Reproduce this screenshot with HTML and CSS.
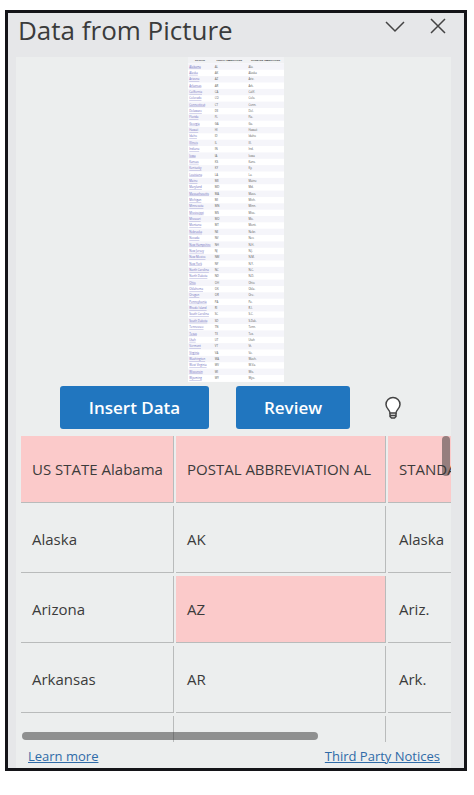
FILE: index.html
```html
<!DOCTYPE html>
<html lang="en">
    <head>
        <meta charset="utf-8">
        <title>Data from Picture</title>
        <link rel="stylesheet" href="styles.css">
    </head>
    <body>
        <main class="pane">
            <header class="pane-header">
                <h1>Data from Picture</h1>
                <button class="icon-btn" aria-label="Pane options">
                    <svg width="20" height="20" viewBox="0 0 20 20"><path d="M1 6l9 9 9-9"/></svg>
                </button>
                <button class="icon-btn" aria-label="Close">
                    <svg width="20" height="20" viewBox="0 0 20 20"><path d="M3 3l14 14M17 3L3 17"/></svg>
                </button>
            </header>
            <div class="content">
                <div class="preview">
                    <svg id="preview" width="96" height="325" viewBox="0 0 302 1022" role="img" aria-label="Selected picture"></svg>
                </div>
                <div class="actions">
                    <button class="primary insert">Insert Data</button>
                    <button class="primary review">Review</button>
                    <button class="icon-btn tip" aria-label="Tips">
                        <svg width="18" height="24" viewBox="0 0 18 24">
                            <path class="bulb" d="M6 17C6 14 2 12.500 2 8.500a7 7 0 0 1 14 0C16 12.500 12 14 12 17z"/>
                            <path d="M6 17v3.500l1.500 1.500h3l1.500-1.500V17M6 19.500h6"/>
                        </svg>
                    </button>
                </div>
                <div class="grid-wrap">
                    <div class="grid-view">
                        <table class="grid">
                            <thead>
                                <tr>
                                    <th class="flag col-state">US STATE Alabama</th>
                                    <th class="flag col-postal">POSTAL ABBREVIATION AL</th>
                                    <th class="flag col-standard">STANDARD</th>
                                </tr>
                            </thead>
                            <tbody>
                                <tr><td>Alaska</td><td>AK</td><td>Alaska</td></tr>
                                <tr><td>Arizona</td><td class="flag">AZ</td><td>Ariz.</td></tr>
                                <tr><td>Arkansas</td><td>AR</td><td>Ark.</td></tr>
                                <tr><td></td><td></td><td></td></tr>
                            </tbody>
                        </table>
                    </div>
                    <div class="bar bar-y"></div>
                    <div class="bar bar-x"></div>
                </div>
                <footer class="links">
                    <a href="#">Learn more</a>
                    <a href="#">Third Party Notices</a>
                </footer>
            </div>
        </main>
        <script src="script.js"></script>
    </body>
</html>
```

FILE: styles.css
```css
* {
    box-sizing: border-box;
}
body {
    margin: 0;
    padding: 10px 7px 24px 5px;
    background: #fff;
    color: #3b3b3b;
    font-family: "Open Sans", "Noto Sans", sans-serif;
    font-size: 15px;
}
button {
    border: none;
    font-family: inherit;
    cursor: pointer;
}
.pane {
    padding: 0 13px 0 8px;
    border: 3px solid #141418;
    background: #e6e7e9;
}
.pane-header {
    display: flex;
    align-items: flex-start;
    gap: 23px;
    height: 44px;
    padding-left: 2px;
}
.pane-header h1 {
    flex: 1;
    margin: 0;
    font-size: 26px;
    font-weight: 400;
    line-height: 34px;
}
.icon-btn {
    display: flex;
    padding: 0;
    background: none;
}
.icon-btn svg {
    fill: none;
    stroke: #444;
    stroke-width: 1.5;
}
.pane-header .icon-btn {
    margin-top: 3px;
}
.pane-header .icon-btn:last-child {
    margin-right: 3px;
}
.content {
    background: #eceeee;
}
.preview {
    display: flex;
    justify-content: center;
    padding-left: 4px;
}
.preview text {
    font-size: 9px;
    fill: #555;
}
.preview .name {
    fill: #6a6aba;
    text-decoration: underline;
}
.preview .head {
    font-size: 7px;
    font-weight: 700;
    fill: #333;
}
.actions {
    display: flex;
    align-items: center;
    gap: 27px;
    padding: 4px 0 7px 44px;
}
.primary {
    height: 43px;
    border-radius: 3px;
    background: #2176bf;
    color: #fff;
    font-size: 17px;
    font-weight: 600;
}
.insert {
    width: 149px;
}
.review {
    width: 114px;
}
.tip {
    margin-left: 7px;
}
.tip .bulb {
    fill: #fff;
}
.grid-wrap {
    position: relative;
    padding-left: 5px;
}
.grid-view {
    height: 306px;
    overflow: auto;
    scrollbar-width: none;
}
.grid {
    width: 640px;
    border-collapse: separate;
    border-spacing: 0;
    table-layout: fixed;
}
.grid th,
.grid td {
    height: 70px;
    padding: 0 11px 2px;
    border: solid #eceeee;
    border-width: 0 2px 3px 0;
    background-clip: padding-box;
    box-shadow: inset -1px -1px #b9bbbb;
    font-weight: 400;
    text-align: left;
    white-space: nowrap;
}
.col-state {
    width: 155px;
}
.col-postal {
    width: 212px;
}
.grid .flag {
    background-color: #fbcaca;
}
.bar {
    position: absolute;
    border-radius: 4px;
    background: rgba(50, 50, 50, .5);
}
.bar-y {
    top: 0;
    right: 1px;
    width: 8px;
    height: 40px;
}
.bar-x {
    bottom: 2px;
    left: 6px;
    width: 68%;
    height: 8px;
}
.links {
    display: flex;
    justify-content: space-between;
    padding: 5px 11px 2px 12px;
    font-size: 13px;
    line-height: 19px;
}
.links a {
    color: #2f6ba8;
}
```

FILE: script.js
```js
const states = [
    ["Alabama", "AL", "Ala."], ["Alaska", "AK", "Alaska"], ["Arizona", "AZ", "Ariz."],
    ["Arkansas", "AR", "Ark."], ["California", "CA", "Calif."], ["Colorado", "CO", "Colo."],
    ["Connecticut", "CT", "Conn."], ["Delaware", "DE", "Del."], ["Florida", "FL", "Fla."],
    ["Georgia", "GA", "Ga."], ["Hawaii", "HI", "Hawaii"], ["Idaho", "ID", "Idaho"],
    ["Illinois", "IL", "Ill."], ["Indiana", "IN", "Ind."], ["Iowa", "IA", "Iowa"],
    ["Kansas", "KS", "Kans."], ["Kentucky", "KY", "Ky."], ["Louisiana", "LA", "La."],
    ["Maine", "ME", "Maine"], ["Maryland", "MD", "Md."], ["Massachusetts", "MA", "Mass."],
    ["Michigan", "MI", "Mich."], ["Minnesota", "MN", "Minn."], ["Mississippi", "MS", "Miss."],
    ["Missouri", "MO", "Mo."], ["Montana", "MT", "Mont."], ["Nebraska", "NE", "Nebr."],
    ["Nevada", "NV", "Nev."], ["New Hampshire", "NH", "N.H."], ["New Jersey", "NJ", "N.J."],
    ["New Mexico", "NM", "N.M."], ["New York", "NY", "N.Y."], ["North Carolina", "NC", "N.C."],
    ["North Dakota", "ND", "N.D."], ["Ohio", "OH", "Ohio"], ["Oklahoma", "OK", "Okla."],
    ["Oregon", "OR", "Ore."], ["Pennsylvania", "PA", "Pa."], ["Rhode Island", "RI", "R.I."],
    ["South Carolina", "SC", "S.C."], ["South Dakota", "SD", "S.Dak."], ["Tennessee", "TN", "Tenn."],
    ["Texas", "TX", "Tex."], ["Utah", "UT", "Utah"], ["Vermont", "VT", "Vt."],
    ["Virginia", "VA", "Va."], ["Washington", "WA", "Wash."], ["West Virginia", "WV", "W.Va."],
    ["Wisconsin", "WI", "Wis."], ["Wyoming", "WY", "Wyo."]
];

// picture thumbnail
const rowHeight = 20;
let html = '<rect width="302" height="1022" fill="#fff"/>' +
    '<rect width="302" height="20" fill="#f1f2f4"/>' +
    '<text class="head" x="22" y="13">US STATE</text>' +
    '<text class="head" x="90" y="13">POSTAL ABBREVIATION</text>' +
    '<text class="head" x="198" y="13">STANDARD ABBREVIATION</text>';
states.forEach(function (row, i) {
    const y = (i + 1) * rowHeight;
    if (i % 2 === 0) {
        html += `<rect y="${y}" width="302" height="${rowHeight}" fill="#f5f5fa"/>`;
    }
    html += `<text class="name" x="4" y="${y + 13}">${row[0]}</text>` +
        `<text x="84" y="${y + 13}">${row[1]}</text>` +
        `<text x="190" y="${y + 13}">${row[2]}</text>`;
});
document.querySelector("#preview").innerHTML = html;
```
